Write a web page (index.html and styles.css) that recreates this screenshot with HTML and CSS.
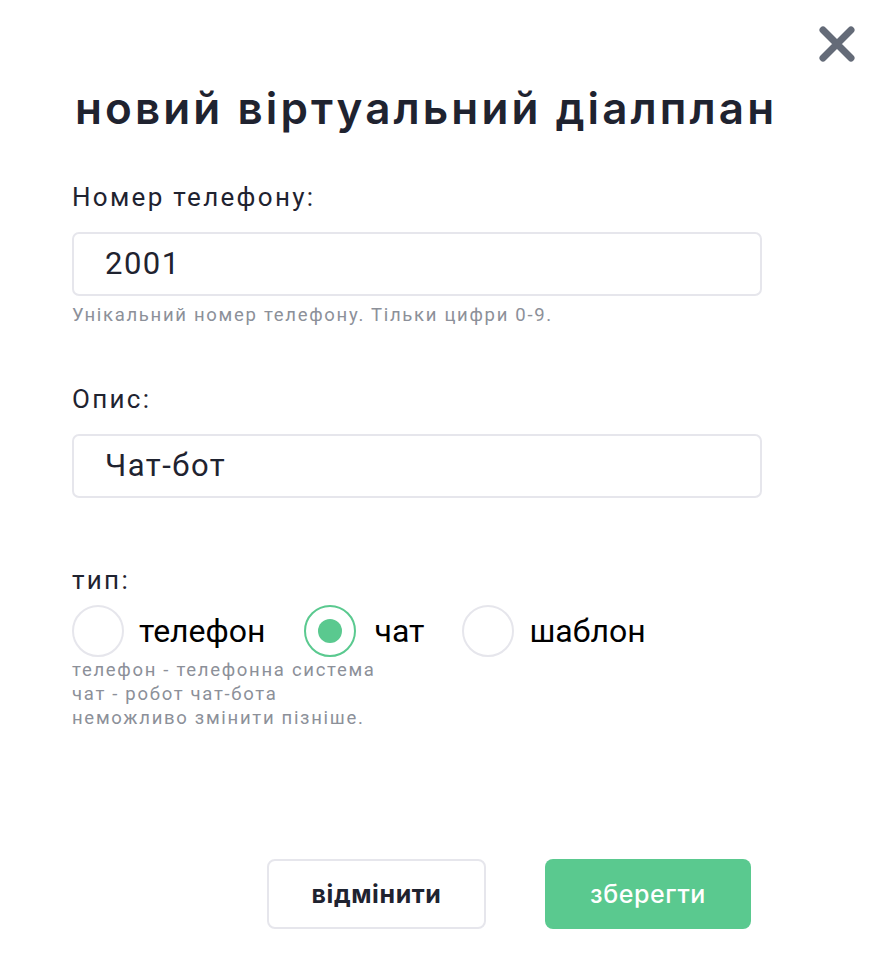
FILE: index.html
```html
<!DOCTYPE html>
<html lang="uk">
<head>
<meta charset="utf-8">
<link rel="stylesheet" href="styles.css">
</head>
<body>
<div class="dialog">
  <button class="close" aria-label="close">
    <svg width="38" height="38" viewBox="0 0 38 38"><path d="M5 5 L33 33 M33 5 L5 33" stroke="#646b78" stroke-width="7" stroke-linecap="round" fill="none"/></svg>
  </button>
  <h1 class="title">новий віртуальний діалплан</h1>

  <div class="field">
    <label class="label">Номер телефону:</label>
    <div class="input">2001</div>
    <div class="help">Унікальний номер телефону. Тільки цифри 0-9.</div>
  </div>

  <div class="field field2">
    <label class="label">Опис:</label>
    <div class="input">Чат-бот</div>
  </div>

  <div class="field field3">
    <label class="label">тип:</label>
    <div class="radios">
      <div class="radio"><span class="circle"></span><span class="rlabel">телефон</span></div>
      <div class="radio"><span class="circle checked"></span><span class="rlabel">чат</span></div>
      <div class="radio"><span class="circle"></span><span class="rlabel">шаблон</span></div>
    </div>
    <div class="help help-lines">телефон - телефонна система<br>чат - робот чат-бота<br>неможливо змінити пізніше.</div>
  </div>

  <div class="actions">
    <button class="btn cancel">відмінити</button>
    <button class="btn save">зберегти</button>
  </div>
</div>
</body>
</html>
```
FILE: styles.css
```css
html, body { margin: 0; padding: 0; background: #fff; }
body { font-family: Roboto, "Noto Sans", sans-serif; color: #1f2330; }
.dialog { position: relative; width: 885px; height: 963px; box-sizing: border-box; padding: 78px 0 0 72px; }
.close { position: absolute; top: 25px; right: 29px; width: 38px; height: 38px; padding: 0; border: 0; background: none; }
.close svg { display: block; }
.title { margin: 0 0 0 3px; font-family: Inter, sans-serif; font-weight: 600; font-size: 44px; line-height: 60px; letter-spacing: 3.1px; color: #1f2330; }
.field { width: 690px; }
.label { display: block; font-size: 26px; line-height: 32px; letter-spacing: 2.3px; color: #1f2330; margin-top: 43px; }
.input { box-sizing: border-box; height: 64px; margin-top: 19px; border: 2px solid #e6e6ec; border-radius: 7px; padding: 0 0 0 31px; font-size: 31px; line-height: 60px; letter-spacing: 1.5px; color: #1f2330; }
.help { font-size: 18.5px; line-height: 24px; letter-spacing: 1.7px; color: #8c9099; margin-top: 7px; }
.field2 .label { margin-top: 56px; }
.field3 .label { margin-top: 66px; }
.radios { display: flex; align-items: center; margin-top: 9px; }
.radio { display: flex; align-items: center; margin-right: 38px; }
.radio:nth-child(2) .rlabel { margin-left: 19px; }
.circle { box-sizing: border-box; width: 52px; height: 52px; border-radius: 50%; border: 2px solid #e6e6ec; display: flex; align-items: center; justify-content: center; }
.circle.checked { border-color: #5ac98f; }
.circle.checked::after { content: ""; width: 24px; height: 24px; border-radius: 50%; background: #5ac98f; }
.rlabel { margin-left: 15px; font-size: 32px; line-height: 38px; color: #000; }
.help-lines { margin-top: 1px; }
.actions { display: flex; justify-content: flex-end; gap: 59px; width: 679px; margin-top: 129px; }
.btn { box-sizing: border-box; height: 70px; border-radius: 8px; font-family: Inter, sans-serif; font-size: 25px; letter-spacing: 0.6px; cursor: pointer; }
.cancel { width: 219px; background: #fff; border: 2px solid #e6e6ec; color: #1f2330; font-weight: 700; }
.save { width: 206px; background: #5ac98f; border: 0; color: #fff; font-weight: 500; }
```
